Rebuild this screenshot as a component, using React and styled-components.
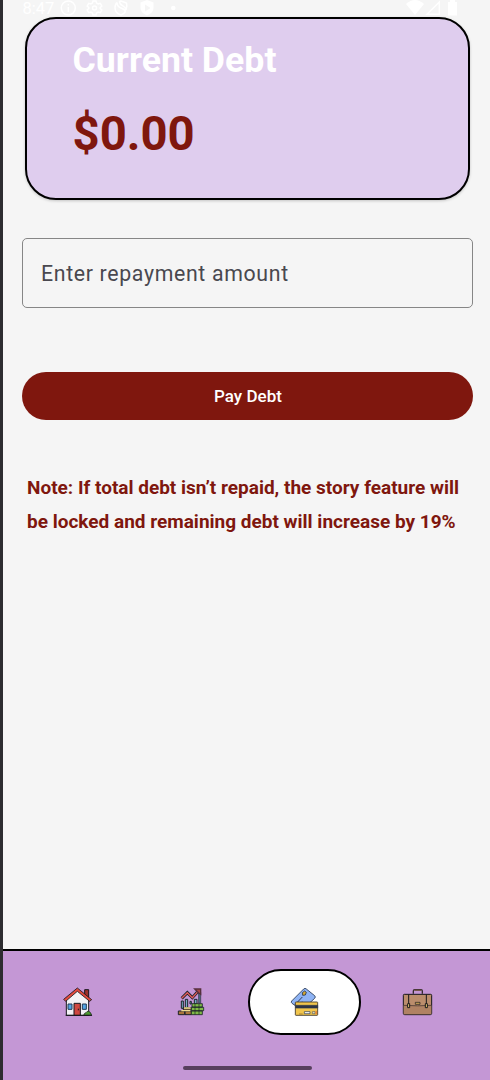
import React from "react";
import styled, { createGlobalStyle } from "styled-components";

const GlobalStyle = createGlobalStyle`
  * { box-sizing: border-box; }
  body { margin: 0; background: #f5f5f5; font-family: Roboto, "Liberation Sans", sans-serif; }
`;

const Screen = styled.div`
  display: flex;
  flex-direction: column;
  width: 490px;
  height: 1080px;
  overflow: hidden;
  background: #f5f5f5;
  border-left: 3px solid #2d2c30;
`;

const StatusBar = styled.header`
  display: flex;
  justify-content: space-between;
  height: 17px;
  padding: 0 32px 0 19.5px;
  color: #fff;
`;

const StatusGroup = styled.div`
  display: flex;
  align-items: flex-start;
`;

const Clock = styled.span`
  width: 37.5px;
  font-size: 16.5px;
  line-height: 17px;
  white-space: nowrap;
`;

const StatusIcons = styled.svg`
  display: block;
  flex: none;
`;

const Main = styled.main`
  flex: 1;
  display: flex;
  flex-direction: column;
  padding: 0 17px 0 19px;
`;

const DebtCard = styled.section`
  height: 183px;
  margin: 0 3px;
  padding: 19px 45.5px;
  background: #dfcdee;
  border: 2px solid #000;
  border-radius: 31px;
  box-shadow: 0 1px 3px rgba(0, 0, 0, 0.2);
`;

const CardTitle = styled.h1`
  margin: 0;
  color: #fff;
  font-size: 35.7px;
  line-height: 44px;
  font-weight: 700;
`;

const Amount = styled.p`
  margin: 23px 0 0;
  color: #7f170e;
  font-size: 47.3px;
  line-height: 58px;
  font-weight: 700;
`;

const AmountInput = styled.input`
  width: 100%;
  height: 70px;
  margin-top: 38px;
  padding: 0 18px;
  border: 1px solid #868686;
  border-radius: 5px;
  background: transparent;
  font: 400 21.3px Roboto, sans-serif;
  letter-spacing: 0.66px;
  outline: none;
  &::placeholder { color: #49484f; opacity: 1; }
`;

const PayButton = styled.button`
  width: 100%;
  height: 48px;
  margin-top: 64px;
  padding: 0 0 0 1px;
  border: 0;
  border-radius: 24px;
  background: #7f170e;
  color: #fff;
  font: 500 17px Roboto, sans-serif;
  letter-spacing: 0.05px;
`;

const Note = styled.p`
  margin: 51px 0 0 5px;
  color: #7f170e;
  font-size: 19px;
  line-height: 34px;
  font-weight: 700;
  white-space: nowrap;
`;

const NavBar = styled.nav`
  display: flex;
  flex-direction: column;
  height: 131px;
  padding: 18px 16px 0 19px;
  border-top: 2px solid #000;
  background: #c497d5;
`;

const Tabs = styled.div`
  display: grid;
  grid-template-columns: repeat(4, 1fr);
  width: 100%;
  height: 66px;
`;

const Tab = styled.a`
  display: flex;
  align-items: center;
  justify-content: center;
  border-radius: 33px;
  border: 2px solid ${(p) => (p.$active ? "#000" : "transparent")};
  background: ${(p) => (p.$active ? "#fff" : "transparent")};
`;

const TabIcon = styled.svg`
  width: 31px;
  height: 30px;
  overflow: visible;
`;

const HomeIndicator = styled.div`
  width: 129px;
  height: 4px;
  margin: 31px 0 0 161px;
  border-radius: 2px;
  background: #573f5d;
`;

function NoticeIcons() {
  return (
    <StatusIcons width="120" height="16" viewBox="0 0 120 16" fill="none" stroke="#fff" strokeWidth="1.5">
      <circle cx="8.3" cy="8" r="7" />
      <path d="M8.3 7v5M8.3 4v1.5" />
      <g transform="translate(34.5 8)">
        <path d="M-1.5-7h3l.6 2.1 1.6.9 2.1-.6 1.5 2.6-1.6 1.5v1l1.6 1.5-1.5 2.6-2.1-.6-1.6.9-.6 2.1h-3l-.6-2.1-1.6-.9-2.1.6-1.5-2.6 1.6-1.5v-1l-1.6-1.5 1.5-2.6 2.1.6 1.6-.9z" />
        <circle r="2" />
      </g>
      <path d="M57 2.500Q55 4 55 8q0 5 6 7 3-1 4.500-3.500M59.500 1.200L61 1l5.500 2q1 3-.500 7M57 2.500q0 4 4 5.500t4.500 3.500M59.500 1.200q0 3 3 4.500t3.500 4" />
      <path d="M87 0l6.5 2.5V8q0 4.5-6.5 7.5-6.5-3-6.5-7.5V2.5z" fill="#fff" stroke="none" />
      <path d="M85 4.500v7l5.500-3.500z" fill="#f5f5f5" stroke="none" />
      <circle cx="113.3" cy="8" r="2.3" fill="#fff" stroke="none" />
    </StatusIcons>
  );
}

function SignalIcons() {
  return (
    <StatusIcons width="52" height="16" viewBox="0 0 52 16" fill="#fff">
      <path d="M0 4Q9-4 18 4L9 15z" />
      <path d="M21 14.2L33.3 2v12.2z" fill="none" stroke="#fff" strokeWidth="1.5" />
      <path d="M42 2h2V0h5v2h2v13.5h-9z" />
    </StatusIcons>
  );
}

function HomeIcon() {
  return (
    <TabIcon viewBox="0 0 93 90" stroke="#17171d" strokeWidth="3">
      <path d="M65 29V8h12v33" fill="#9d302b" />
      <path d="M10 36L43 8l34 29v48H10z" fill="#f3f2f5" />
      <path d="M2 37L43 3l43 35-6 5L43 13 8 43z" fill="#e44a3d" strokeWidth="2.5" />
      <path d="M33 49h19v36H33z" fill="#cf4740" />
      <path d="M15 51h12v16H15zM58 51h12v16H58z" fill="#55a5e5" stroke="#223a57" />
      <path d="M46 65v5" />
      <path d="M62 85q1-7 7-8 3-5 8-4 6 1 9 12z" fill="#4c9930" strokeWidth="2" />
      <path d="M8 85h79" />
    </TabIcon>
  );
}

function GrowthIcon() {
  return (
    <TabIcon viewBox="0 0 93 90" stroke="#1c2328" strokeWidth="3">
      <path d="M16 42h6v22h-6zM28 37h7v25h-7zM42 43h4v8h-4zM55 37h8v14h-8z" fill="#78a9c4" />
      <path d="M68 16h6v32h-6z" fill="#426f86" stroke="#4c4a62" />
      <path d="M17 34l17-17 15 15 20-22" fill="none" strokeWidth="9" />
      <path d="M17 34l17-17 15 15 20-22" fill="none" stroke="#e65b5c" strokeWidth="4" />
      <path d="M56 6h18v16l-6-4-6-6z" fill="#a94744" stroke="#55303c" strokeWidth="4" />
      <path d="M22 62h25v7H22zM7 72h19v11H7zM27 72h19v11H27z" fill="#a8753c" />
      <path d="M24 63h20M16 71h27" stroke="#eddb91" strokeWidth="4" />
      <path d="M48 50h31v10H48zM46 61h37v10H46zM46 72h33v11H46z" fill="#7fbb45" strokeWidth="2.5" />
      <path d="M57 50v33M69 50v33" strokeWidth="2" />
    </TabIcon>
  );
}

function CardsIcon() {
  return (
    <TabIcon viewBox="-3 0 93 90" stroke="#26364f" strokeWidth="2.5">
      <path d="M5 42L41 6q4-4 8 0l25 20q4 4 0 8L38 67q-4 3-8-1L6 49q-4-3-1-7z" fill="#8fb4f5" />
      <path d="M15 53l22-23M24 56l12-12" fill="none" stroke="#182438" />
      <path d="M37 17l7-5 5 4-3 8-8 1z" fill="#d5a72e" />
      <path d="M18 45h63q2 0 2 2v36q0 2-2 2H18q-2 0-2-2V47q0-2 2-2z" fill="#f2c64d" stroke="#3c3224" />
      <path d="M17 55h66v8H17z" fill="#2f3444" strokeWidth="2" />
      <path d="M43 74h17v6H43z" fill="#fff" strokeWidth="2" />
      <path d="M27 81h11" stroke="#9b752a" />
      <path d="M67 74h8v6h-8z" fill="#eee7c0" strokeWidth="1.5" />
      <path d="M77 73h3v8h-3" fill="#e8772e" stroke="#e8772e" strokeWidth="1.5" />
    </TabIcon>
  );
}

function BriefcaseIcon() {
  return (
    <TabIcon viewBox="-3 0 93 90" stroke="#17171b" strokeWidth="3">
      <path d="M31 20v-8q0-4 4-4h19q4 0 4 4v8" fill="none" stroke="#352b2e" strokeWidth="4" />
      <path d="M34 10h21" stroke="#76564c" strokeWidth="4" />
      <path d="M4 22h79q3 0 3 3v54q0 4-4 4H5q-4 0-4-4V25q0-3 3-3z" fill="#bb8d6c" />
      <path d="M2 55q41 3 83 0v24q0 3-3 3H5q-3 0-3-3z" fill="#b08263" stroke="none" />
      <path d="M2 55q42 3 83 0" fill="none" stroke="#4a3833" strokeWidth="2.5" />
      <path d="M17 23v34M70 23v34" />
      <path d="M14 50h6v12h-6zM67 50h6v12h-6z" fill="#ebcb71" />
      <path d="M37 46h14v6H37z" fill="#cba557" strokeWidth="2" />
    </TabIcon>
  );
}

const tabs = [
  { name: "Home", Icon: HomeIcon },
  { name: "Investments", Icon: GrowthIcon },
  { name: "Debt", Icon: CardsIcon, active: true },
  { name: "Work", Icon: BriefcaseIcon },
];

export default function App() {
  return (
    <>
      <GlobalStyle />
      <Screen>
        <StatusBar>
          <StatusGroup>
            <Clock>8:47</Clock>
            <NoticeIcons />
          </StatusGroup>
          <SignalIcons />
        </StatusBar>
        <Main>
          <DebtCard>
            <CardTitle>Current Debt</CardTitle>
            <Amount>$0.00</Amount>
          </DebtCard>
          <AmountInput placeholder="Enter repayment amount" />
          <PayButton>Pay Debt</PayButton>
          <Note>
            Note: If total debt isn’t repaid, the story feature will
            <br />
            be locked and remaining debt will increase by 19%
          </Note>
        </Main>
        <NavBar>
          <Tabs>
            {tabs.map(({ name, Icon, active }) => (
              <Tab key={name} aria-label={name} $active={active}>
                <Icon />
              </Tab>
            ))}
          </Tabs>
          <HomeIndicator />
        </NavBar>
      </Screen>
    </>
  );
}
